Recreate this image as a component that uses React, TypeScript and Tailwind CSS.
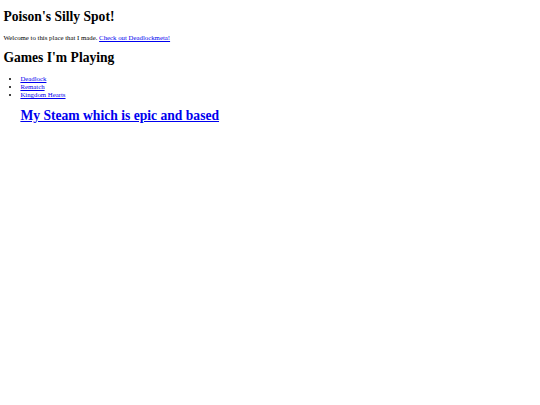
export default function App() {
  return (
    <div
      className="min-h-[405px] bg-white px-[3.4px] text-black leading-[normal]"
      style={{ fontFamily: '"Liberation Serif", "Times New Roman", serif' }}
    >
      <div className="pt-[9.1px]">
        <h1 className="mb-[9.1px] text-[13.6px] font-bold">Poison's Silly Spot!</h1>
        <p className="my-[9.1px] text-[6.8px]">
          Welcome to this place that I made.{" "}
          <a href="#" className="text-[#0000ee] underline">
            Check out Deadlockmeta!
          </a>
        </p>
        <h2 className="my-[9.1px] text-[13.6px] font-bold">Games I'm Playing</h2>
        <ul className="my-[9.1px] list-disc pl-[17px] text-[6.8px] leading-[8px]">
          <li>
            <a href="#" className="text-[#0000ee] underline">Deadlock</a>
          </li>
          <li>
            <a href="#" className="text-[#0000ee] underline">Rematch</a>
          </li>
          <li>
            <a href="#" className="text-[#0000ee] underline">Kingdom Hearts</a>
          </li>
        </ul>
        <h1 className="mx-[17px] mt-[9.1px] text-[13.6px] font-bold">
          <a href="#" className="text-[#0000ee] underline">My Steam which is epic and based</a>
        </h1>
      </div>
    </div>
  );
}
